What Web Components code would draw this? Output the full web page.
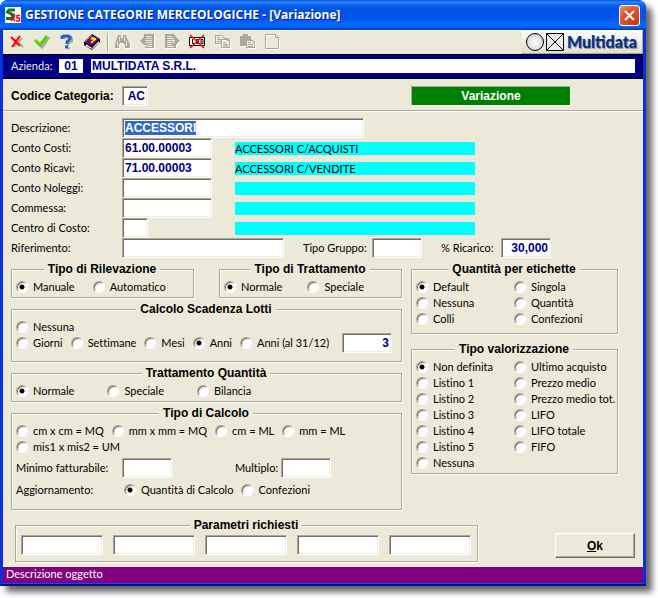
<!DOCTYPE html>
<html lang="it">
<head>
<meta charset="utf-8">
<title>Gestione categorie merceologiche</title>
<style>
    body {
        margin: 0;
        padding: 0 12px 12px 0;

        background-color: #FFF;
    }
</style>
</head>
<body>
<app-window heading="GESTIONE CATEGORIE MERCEOLOGICHE - [Variazione]" status="Descrizione oggetto">
    <tool-bar></tool-bar>
    <company-bar code="01" name="MULTIDATA S.R.L."></company-bar>
    <category-form></category-form>
</app-window>

<script>
const makeTemplate = (html) => {
    const template = document.createElement("template");
    template.innerHTML = html;
    return template;
};

class BaseElement extends HTMLElement {
    constructor() {
        super();
        this.attachShadow({mode: "open"});
        this.shadowRoot.append(this.constructor.template.content.cloneNode(true));
    }

    find(selector) {
        return this.shadowRoot.querySelector(selector);
    }
}

// ---- window frame ----
class AppWindow extends BaseElement {
    static template = makeTemplate(`
    <style>
        :host {
            --face: #ECE9D8;
            --edge: #ACA899;
            --dark-edge: #716F64;
            --ink: #000080;

            display: block;
            overflow: hidden;

            border-radius: 8px 8px 0 0;
            box-shadow: 6px 6px 6px #0009;

            background-color: #0831D9;

            color: #000;
            font: 11px/16px Lato, "Liberation Sans", sans-serif;
            font-variant-ligatures: none;
        }
        header {
            height: 30px;
            padding: 0 6px 0 5px;
            box-sizing: border-box;

            display: flex;
            align-items: center;
            gap: 4px;

            background: linear-gradient(#0A4BD8 0, #2B86FF 2px, #0A62EE 5px, #0054E3 9px, #0055E8 17px, #0568FF 24px, #0566FA 27px, #0144C4 29px, #0138B4 30px);
        }
        h1 {
            margin: 0;
            flex: 1;

            color: #FFF;
            font: bold 12px/20px "Open Sans", sans-serif;
            text-shadow: 1px 1px #0A1883;
            white-space: nowrap;
        }
        header button {
            width: 21px;
            height: 21px;
            padding: 0;

            border: 1px solid #FFF;
            border-radius: 3px;

            background: radial-gradient(circle at 80% 90%, #C83A10, #E0512F 60%, #F09A80);
        }
        svg {
            display: block;
        }
        .content {
            margin: 0 3px;

            background-color: var(--face);
        }
        footer {
            height: 16px;
            margin: 0 3px;
            padding: 0 3px;

            border-bottom: 1px solid #1A4BE8;

            background-color: #800080;

            color: #FFF;
            line-height: 14px;
        }
        .frame {
            height: 2px;

            background-color: #00138C;
        }
    </style>
    <header>
        <svg width="16" height="16" viewBox="0 0 16 16">
            <path fill="#FFF" d="M0 0h16v16H0z"/>
            <path fill="none" stroke="#0A7A28" stroke-width="3" d="M10 3H4L2.500 5l6 3v2L6 11.500H1"/>
            <path fill="none" stroke="#E01020" stroke-width="1.500" d="M6 8l4 6M10 8l-4 6M15 8.500h-3v2.500h2.500v3H11"/>
        </svg>
        <h1></h1>
        <button type="button" aria-label="Chiudi">
            <svg width="19" height="19" viewBox="0 0 19 19">
                <path stroke="#FFF" stroke-width="2" d="M5 5l9 9M14 5l-9 9"/>
            </svg>
        </button>
    </header>
    <div class="content"><slot></slot></div>
    <footer></footer>
    <div class="frame"></div>
    `);

    connectedCallback() {
        this.find("h1").textContent = this.getAttribute("heading");
        this.find("footer").textContent = this.getAttribute("status");
    }
}

// ---- toolbar ----
// disabled icons are grey with a white copy one pixel down and right
const shade = (d) => `<path fill="#FFF" fill-rule="evenodd" transform="translate(1 1)" d="${d}"/><path fill="#ACA899" fill-rule="evenodd" d="${d}"/>`;
const lines = (d) => `<path fill="none" stroke="#ECE9D8" d="${d}"/>`;

const toolIcons = [
    ["Annulla", `
        <path fill="none" stroke="#ACA899" stroke-width="2" d="M7 6l8 8M14 5l-8 9"/>
        <path fill="none" stroke="#F00" stroke-width="2" d="M3 4l9 9M12 3l-8 11"/>`],
    ["Conferma", `
        <path fill="none" stroke="#ACA899" stroke-width="3" d="M4 9l5 5 7-10"/>
        <path fill="none" stroke="#5FD010" stroke-width="3" d="M2 7l5 5 7-9"/>`],
    ["Aiuto", `
        <path fill="none" stroke="#ACA899" stroke-width="2" d="M6 6l1-2h5l2 1v3l-4 3v2M9 15h3"/>
        <path fill="none" stroke="#2060C8" stroke-width="3" d="M4 6V4l2-1h4l2 1v2L9 9v2M7 14h3"/>`],
    ["Manuale", `
        <path fill="#000" d="M1 9l8-8 8 5v3l-8 8-8-5z"/>
        <path fill="#FFF" d="M3 11l6 4 7-7v2l-7 6-6-3z"/>
        <path fill="#800080" d="M2 9l7-7 7 4-7 7z"/>
        <path fill="none" stroke="#C060C0" d="M2 9l7-7"/>
        <path fill="none" stroke="#FF0" stroke-width="2" d="M8 6l2-1 2 1-2 2M8 9h2"/>`],
    null,
    ["Cerca", shade("M5 2h3v3h2V2h3l1 3 3 6v4h-5v-4h-1v-1H7v1H6v4H2v-4l2-6z") + lines("M4.500 8v5M13.500 8v5M6.500 4v4M11.500 4v4")],
    ["Precedente", shade("M6 1h10v14H7v-2h2v-1H6l-4-4 4-4z") + lines("M8 3.500h6M8 5.500h6M7 7.500h7M7 9.500h7M10 11.500h4M9 13.500h5")],
    ["Successivo", shade("M2 1h9l2 3 4 4-4 4v3H2z") + lines("M4 3.500h5M4 5.500h7M4 7.500h8M4 9.500h8M4 11.500h5M4 13.500h7")],
    ["Elimina", `
        <path fill="#FFF" stroke="#000" d="M1.500 4.500h15v8h-15z"/>
        <path fill="none" stroke="#000" d="M4.500 6v4.500H7M8.500 6.500h2v4h-2zM13 6.500h2v4h-2z"/>
        <path fill="none" stroke="#F00" stroke-width="1.500" d="M2 2l14 13M16 2L2 15"/>`],
    ["Copia", shade("M2 2h7l3 3h3l2 2v8H8v-4H2zM3 3v7h5V6h3L9 3zM9 7v7h7V8h-2V7z") + `<path fill="none" stroke="#ACA899" d="M4 4.500h3M4 6.500h4M4 8.500h4M10 9.500h3M10 11.500h5M10 13h5"/>`],
    ["Incolla", shade("M2 3h3V1h5v2h3v3l4 3v6H8v-2H2z") + `<path fill="#ECE9D8" d="M9 8h5l2 2v4H9z"/><path fill="none" stroke="#ACA899" d="M10 9.500h3M10 11.500h5M10 13.500h5"/>`],
    ["Nuovo", `
        <path fill="none" stroke="#FFF" d="M3.500 2.500h9l4 4v10h-13z"/>
        <path fill="none" stroke="#ACA899" d="M2.500 1.500h10l3 3v11h-13zM12.500 1.500v3h3"/>`],
];

class ToolBar extends BaseElement {
    static template = makeTemplate(`
    <style>
        :host {
            height: 24px;

            display: flex;
            align-items: center;
            justify-content: space-between;

            background-color: var(--face);
            box-shadow: inset 0 1px #FFF;
        }
        .tools {
            padding-left: 2px;

            display: flex;
            align-items: center;
        }
        .tools button {
            width: 25px;
            height: 22px;
            padding: 0 3px;

            border: none;

            background: none;
        }
        svg {
            display: block;
        }
        hr {
            width: 1px;
            height: 18px;
            margin: 0 1px 0 2px;

            border: none;
            border-right: 1px solid #FFF;

            background-color: var(--edge);
        }
        .brand {
            height: 22px;
            padding: 0 5px 0 4px;

            display: flex;
            align-items: center;
            gap: 2px;

            border-right: 1px solid var(--edge);
            border-bottom: 1px solid var(--edge);

            background: linear-gradient(#FDFDFA, #E2DFD0);

            color: #003090;
            font: 900 16px/20px Lato, sans-serif;
            text-shadow: 1px 1px 1px #888;
        }
    </style>
    <div class="tools"></div>
    <div class="brand">
        <svg width="39" height="20" viewBox="0 0 39 20">
            <defs>
                <radialGradient id="ball"><stop stop-color="#FFF"/><stop offset="1" stop-color="#D8D8DC"/></radialGradient>
            </defs>
            <circle cx="9" cy="10" r="8.500" fill="url(#ball)" stroke="#000"/>
            <path fill="#EEE" stroke="#000" d="M20.500 1.500h17v17h-17z"/>
            <path stroke="#000" d="M21 2l16 16M37 2L21 18"/>
        </svg>
        <span>Multidata</span>
    </div>
    `);

    connectedCallback() {
        this.find(".tools").innerHTML = toolIcons.map((tool) => tool
            ? `<button type="button" aria-label="${tool[0]}"><svg width="18" height="18" viewBox="0 0 18 18">${tool[1]}</svg></button>`
            : "<hr>").join("");
    }
}

// ---- company strip ----
class CompanyBar extends BaseElement {
    static template = makeTemplate(`
    <style>
        :host {
            padding: 4px 7px 5px 8px;

            display: flex;
            align-items: center;
            gap: 8px;

            border: 1px solid #000;
            border-left: none;

            background-color: var(--ink);
        }
        label {
            width: 40px;

            color: #ECE9D8;
            line-height: 14px;
        }
        input {
            height: 14px;
            padding: 0 1px;
            box-sizing: border-box;

            border: none;

            background-color: #FFF;

            color: var(--ink);
            font: bold 12px/14px "Liberation Sans", sans-serif;
        }
        #code {
            width: 24px;

            text-align: center;
        }
        #name {
            min-width: 0;
            flex: 1;
        }
    </style>
    <label for="code">Azienda:</label>
    <input id="code" readonly>
    <input id="name" aria-label="Ragione sociale" readonly>
    `);

    connectedCallback() {
        this.find("#code").value = this.getAttribute("code");
        this.find("#name").value = this.getAttribute("name");
    }
}

// ---- sunken text box with its label ----
class TextField extends BaseElement {
    static template = makeTemplate(`
    <style>
        :host {
            display: flex;
            align-items: center;
        }
        label {
            width: var(--label-width, auto);

            white-space: nowrap;
        }
        :host([strong]) label {
            font: bold 12px/16px "Liberation Sans", sans-serif;
        }
        input {
            width: var(--field-width, 90px);
            min-width: 0;
            height: 20px;
            padding: 0 2px;
            box-sizing: border-box;

            border: 1px solid;
            border-color: var(--edge) #FFF #FFF var(--edge);
            outline: none;
            box-shadow: inset 1px 1px var(--dark-edge), inset -1px -1px #F1EFE2;

            background-color: #FFF;

            color: var(--ink);
            font: bold 12px/14px "Liberation Sans", sans-serif;
        }
        :host([end]) input {
            text-align: right;
        }
        input::selection {
            background-color: #316AC5;

            color: #FFF;
        }
    </style>
    <label for="field"></label>
    <input id="field" type="text">
    `);

    connectedCallback() {
        const label = this.find("label");
        const input = this.find("input");

        if (this.hasAttribute("label")) {
            label.textContent = this.getAttribute("label");
        } else {
            label.remove();
            input.setAttribute("aria-label", this.getAttribute("hint"));
        }
        input.value = this.getAttribute("value") || "";

        if (this.hasAttribute("selected")) {
            input.focus();
            input.select();
        }
    }
}

// ---- etched frame with a centred caption ----
class GroupBox extends BaseElement {
    static template = makeTemplate(`
    <style>
        :host {
            display: block;
        }
        fieldset {
            min-width: 0;
            margin: 0 1px 1px 0;
            padding: 3px 5px var(--box-bottom, 2px) 4px;

            border: 1px solid var(--edge);
            box-shadow: 1px 1px #FFF, inset 1px 1px #FFF;
        }
        legend {
            margin: 0 auto;
            padding: 0 4px;

            background-color: var(--face);

            font: bold 12px/14px "Liberation Sans", sans-serif;
        }
    </style>
    <fieldset>
        <legend></legend>
        <slot></slot>
    </fieldset>
    `);

    connectedCallback() {
        this.find("legend").textContent = this.getAttribute("legend");
    }
}

// Options are split by ";" and rows by "|", a leading "*" marks the checked one.
class RadioList extends BaseElement {
    static template = makeTemplate(`
    <style>
        :host {
            display: block;
        }
        .row {
            display: flex;
            gap: var(--option-gap, 8px);
        }
        :host([columns]) {
            display: grid;
            grid-template-columns: minmax(0, 1fr) minmax(0, 1fr);
        }
        :host([columns]) .row {
            flex-direction: column;
            gap: 0;
        }
        label {
            height: 16px;

            display: flex;
            align-items: center;
            gap: 5px;

            white-space: nowrap;
        }
        input {
            width: 12px;
            height: 12px;
            margin: 0;
            flex: none;
            appearance: none;

            border: 1px solid;
            border-color: var(--edge) #FFF #FFF var(--edge);
            border-radius: 50%;
            box-shadow: inset 1px 1px var(--dark-edge);

            background-color: #FFF;
        }
        input:checked {
            background-image: radial-gradient(circle, #000 2px, #0000 3px);
        }
    </style>
    `);

    connectedCallback() {
        for (const row of this.getAttribute("options").split("|")) {
            const div = document.createElement("div");
            div.className = "row";

            for (const option of row.split(";")) {
                const label = document.createElement("label");
                const input = document.createElement("input");
                input.type = "radio";
                input.name = "option";
                input.checked = option.startsWith("*");
                label.append(input, option.replace("*", ""));
                div.append(label);
            }
            this.shadowRoot.append(div);
        }
    }
}

// ---- the form ----
class CategoryForm extends BaseElement {
    static template = makeTemplate(`
    <style>
        :host {
            display: block;
        }
        .code-row {
            padding: 7px 72px 4px 8px;

            display: flex;
            align-items: center;
            justify-content: space-between;

            border-bottom: 1px solid var(--edge);
            box-shadow: 0 1px #FFF;
        }
        .mode {
            width: 160px;
            box-sizing: border-box;

            border: 1px solid;
            border-color: var(--edge) #FFF #FFF var(--edge);

            background-color: #008000;

            color: #FFF;
            font: bold 12px/18px "Liberation Sans", sans-serif;
            text-align: center;
        }
        .code-row, .fields {
            --label-width: 111px;
        }
        .fields {
            padding: 7px 24px 4px 8px;
        }
        .row {
            display: flex;
            align-items: center;
        }
        output {
            width: 240px;
            height: 13px;
            margin-left: 23px;

            background-color: #0FF;

            line-height: 13px;
        }
        output.short {
            margin-left: 87px;
        }
        .groups {
            padding: 0 24px 0 8px;

            display: grid;
            grid-template-columns: minmax(0, 392fr) minmax(0, 208fr);
            gap: 8px;
        }
        .stack {
            display: flex;
            flex-direction: column;
            gap: 3px;
        }
        .stack.wide {
            gap: 7px;
        }
        .pair {
            display: grid;
            grid-template-columns: 1fr 1fr;
            gap: 24px;
        }
        .lots {
            padding-right: 4px;

            display: flex;
            align-items: flex-end;
            justify-content: space-between;
        }
        .lots radio-list {
            margin-bottom: 2px;
        }
        .measures {
            margin: 3px 0 4px;
        }
        .bottom {
            padding: 7px 8px 4px 12px;

            display: flex;
            align-items: center;
            gap: 76px;
        }
        .bottom group-box {
            flex: 1;
        }
        .params {
            padding: 0 1px;

            display: grid;
            grid-template-columns: repeat(5, 1fr);
            gap: 10px;
        }
        .ok {
            width: 80px;
            height: 25px;
            margin-top: 10px;

            border: 1px solid;
            border-color: #FFF var(--dark-edge) var(--dark-edge) #FFF;
            box-shadow: inset -1px -1px var(--edge), inset 1px 1px #F1EFE2;

            background-color: var(--face);

            color: #000;
            font: bold 12px/16px "Liberation Sans", sans-serif;
        }
    </style>
    <div class="code-row">
        <text-field strong end label="Codice Categoria:" value="AC" style="--field-width: 26px"></text-field>
        <div class="mode">Variazione</div>
    </div>
    <div class="fields">
        <text-field label="Descrizione:" value="ACCESSORI" selected style="--field-width: 242px"></text-field>
        <div class="row">
            <text-field label="Conto Costi:" value="61.00.00003"></text-field>
            <output>ACCESSORI C/ACQUISTI</output>
        </div>
        <div class="row">
            <text-field label="Conto Ricavi:" value="71.00.00003"></text-field>
            <output>ACCESSORI C/VENDITE</output>
        </div>
        <div class="row">
            <text-field label="Conto Noleggi:"></text-field>
            <output></output>
        </div>
        <div class="row">
            <text-field label="Commessa:"></text-field>
            <output></output>
        </div>
        <div class="row">
            <text-field label="Centro di Costo:" style="--field-width: 26px"></text-field>
            <output class="short"></output>
        </div>
        <div class="row">
            <text-field label="Riferimento:" style="--field-width: 162px"></text-field>
            <text-field label="Tipo Gruppo:" style="--label-width: 69px; --field-width: 50px; margin-left: 19px"></text-field>
            <text-field end label="% Ricarico:" value="30,000" style="--label-width: 60px; --field-width: 50px; margin-left: 19px"></text-field>
        </div>
    </div>
    <div class="groups">
        <div class="stack">
            <div class="pair">
                <group-box legend="Tipo di Rilevazione">
                    <radio-list options="*Manuale;Automatico" style="--option-gap: 18px"></radio-list>
                </group-box>
                <group-box legend="Tipo di Trattamento">
                    <radio-list options="*Normale;Speciale" style="--option-gap: 25px"></radio-list>
                </group-box>
            </div>
            <group-box legend="Calcolo Scadenza Lotti" style="--box-bottom: 8px">
                <div class="lots">
                    <radio-list options="Nessuna|Giorni;Settimane;Mesi;*Anni;Anni (al 31/12)"></radio-list>
                    <text-field end hint="Scadenza" value="3" style="--field-width: 50px"></text-field>
                </div>
            </group-box>
            <group-box legend="Trattamento Quantità">
                <radio-list options="*Normale;Speciale;Bilancia" style="--option-gap: 33px"></radio-list>
            </group-box>
            <group-box legend="Tipo di Calcolo" style="--box-bottom: 11px">
                <radio-list options="cm x cm = MQ;mm x mm = MQ;cm = ML;mm = ML|mis1 x mis2 = UM"></radio-list>
                <div class="row measures">
                    <text-field label="Minimo fatturabile:" style="--label-width: 106px; --field-width: 50px"></text-field>
                    <text-field label="Multiplo:" style="--label-width: 46px; --field-width: 50px; margin-left: 63px"></text-field>
                </div>
                <div class="row">
                    <span style="width: 108px">Aggiornamento:</span>
                    <radio-list options="*Quantità di Calcolo;Confezioni"></radio-list>
                </div>
            </group-box>
        </div>
        <div class="stack wide">
            <group-box legend="Quantità per etichette" style="--box-bottom: 6px">
                <radio-list columns options="*Default;Nessuna;Colli|Singola;Quantità;Confezioni"></radio-list>
            </group-box>
            <group-box legend="Tipo valorizzazione">
                <radio-list columns options="*Non definita;Listino 1;Listino 2;Listino 3;Listino 4;Listino 5;Nessuna|Ultimo acquisto;Prezzo medio;Prezzo medio tot.;LIFO;LIFO totale;FIFO"></radio-list>
            </group-box>
        </div>
    </div>
    <div class="bottom">
        <group-box legend="Parametri richiesti" style="--box-bottom: 6px">
            <div class="params">
                <text-field hint="Parametro 1" style="--field-width: 100%"></text-field>
                <text-field hint="Parametro 2" style="--field-width: 100%"></text-field>
                <text-field hint="Parametro 3" style="--field-width: 100%"></text-field>
                <text-field hint="Parametro 4" style="--field-width: 100%"></text-field>
                <text-field hint="Parametro 5" style="--field-width: 100%"></text-field>
            </div>
        </group-box>
        <button class="ok" type="button"><u>O</u>k</button>
    </div>
    `);
}

customElements.define("text-field", TextField);
customElements.define("group-box", GroupBox);
customElements.define("radio-list", RadioList);
customElements.define("tool-bar", ToolBar);
customElements.define("company-bar", CompanyBar);
customElements.define("category-form", CategoryForm);
customElements.define("app-window", AppWindow);
</script>
</body>
</html>
